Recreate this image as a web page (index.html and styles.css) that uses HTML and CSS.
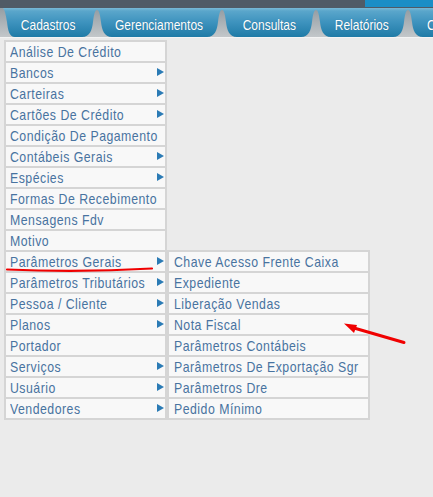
FILE: index.html
```html
<!DOCTYPE html>
<html lang="pt-BR">
<head>
<meta charset="utf-8">
<title>Menu</title>
<link rel="stylesheet" href="styles.css">
</head>
<body>
<div class="topbar"><div class="topbar-accent"></div></div>
<nav class="tabs">
  <svg class="bell-half" width="15" height="29" viewBox="0 0 15 29"><path d="M0 0 L3 0 C5 2 6 8 7 14 C8 22 9 29 15 29 L0 29 Z" fill="url(#g)"/></svg>
  <div class="tab tab-cad"><span class="tab-label">Cadastros</span></div>
  <svg class="bell" width="30" height="29" viewBox="0 0 30 29"><defs><linearGradient id="g" x1="0" y1="0" x2="0" y2="1"><stop offset="0" stop-color="#959ea4"/><stop offset="1" stop-color="#c3c7ca"/></linearGradient></defs><path d="M0 29 C8 29 10 22 11 14 C12 6 13 2 15 2 C17 2 18 6 19 14 C20 22 22 29 30 29 Z" fill="url(#g)"/></svg>
  <div class="tab tab-ger"><span class="tab-label">Gerenciamentos</span></div>
  <svg class="bell" width="30" height="29" viewBox="0 0 30 29"><path d="M0 29 C8 29 10 22 11 14 C12 6 13 2 15 2 C17 2 18 6 19 14 C20 22 22 29 30 29 Z" fill="url(#g)"/></svg>
  <div class="tab tab-con"><span class="tab-label">Consultas</span></div>
  <svg class="bell" width="30" height="29" viewBox="0 0 30 29"><path d="M0 29 C8 29 10 22 11 14 C12 6 13 2 15 2 C17 2 18 6 19 14 C20 22 22 29 30 29 Z" fill="url(#g)"/></svg>
  <div class="tab tab-rel"><span class="tab-label">Relatórios</span></div>
  <svg class="bell" width="30" height="29" viewBox="0 0 30 29"><path d="M0 29 C8 29 10 22 11 14 C12 6 13 2 15 2 C17 2 18 6 19 14 C20 22 22 29 30 29 Z" fill="url(#g)"/></svg>
  <div class="tab tab-last"><span class="tab-label tab-label-left">Configurações</span></div>
</nav>
<div class="menus">
  <ul class="menu">
    <li class="item"><span class="label">Análise De Crédito</span></li>
    <li class="item has-sub"><span class="label">Bancos</span></li>
    <li class="item has-sub"><span class="label">Carteiras</span></li>
    <li class="item has-sub"><span class="label">Cartões De Crédito</span></li>
    <li class="item"><span class="label">Condição De Pagamento</span></li>
    <li class="item has-sub"><span class="label">Contábeis Gerais</span></li>
    <li class="item has-sub"><span class="label">Espécies</span></li>
    <li class="item"><span class="label">Formas De Recebimento</span></li>
    <li class="item"><span class="label">Mensagens Fdv</span></li>
    <li class="item"><span class="label">Motivo</span></li>
    <li class="item has-sub open"><span class="label">Parâmetros Gerais</span>
      <ul class="menu submenu">
        <li class="item"><span class="label">Chave Acesso Frente Caixa</span></li>
        <li class="item"><span class="label">Expediente</span></li>
        <li class="item"><span class="label">Liberação Vendas</span></li>
        <li class="item"><span class="label">Nota Fiscal</span></li>
        <li class="item"><span class="label">Parâmetros Contábeis</span></li>
        <li class="item"><span class="label">Parâmetros De Exportação Sgr</span></li>
        <li class="item"><span class="label">Parâmetros Dre</span></li>
        <li class="item"><span class="label">Pedido Mínimo</span></li>
      </ul>
    </li>
    <li class="item has-sub"><span class="label">Parâmetros Tributários</span></li>
    <li class="item has-sub"><span class="label">Pessoa / Cliente</span></li>
    <li class="item has-sub"><span class="label">Planos</span></li>
    <li class="item"><span class="label">Portador</span></li>
    <li class="item has-sub"><span class="label">Serviços</span></li>
    <li class="item has-sub"><span class="label">Usuário</span></li>
    <li class="item has-sub"><span class="label">Vendedores</span></li>
  </ul>
</div>
<svg class="annot" width="433" height="497" viewBox="0 0 433 497">
  <path d="M7 269.5 C50 271.5 110 271 152 268.5" stroke="#f00000" stroke-width="2.2" fill="none" stroke-linecap="round"/>
  <path d="M404 342.5 L354 328" stroke="#f00000" stroke-width="3" fill="none" stroke-linecap="round"/>
  <path d="M344 323.5 L357 325 L354 333 Z" fill="#f00000"/>
</svg>
</body>
</html>
```
FILE: styles.css
```css
* { box-sizing: border-box; }
html, body { margin: 0; padding: 0; }
body {
  width: 433px;
  height: 497px;
  overflow: hidden;
  background: #ebebeb;
  font-family: "Liberation Sans", Arial, sans-serif;
  position: relative;
}
.topbar {
  height: 8px;
  background: #505b66;
  display: flex;
  justify-content: flex-end;
}
.topbar-accent {
  width: 68px;
  height: 7px;
  background: #1b8ec6;
}
.tabs {
  display: flex;
  height: 29px;
  overflow: hidden;
  background: linear-gradient(#79b9d6 0, #5aa6cb 3px, #3e93be 14px, #1f7ba7 100%);
  border-bottom: 1px solid #f4f4f4;
  box-sizing: content-box;
}
.bell, .bell-half { flex: none; display: block; }
.tab {
  flex: none;
  display: flex;
  justify-content: center;
  color: #fff;
  font-size: 15px;
  line-height: 29px;
  padding-top: 2px;
  white-space: nowrap;
  text-shadow: 0 0 1px rgba(0,40,70,.35);
}
.tab-label {
  display: inline-block;
  transform: scaleX(0.8);
  transform-origin: 50% 50%;
}
.tab-label-left { transform-origin: 0 50%; }
.tab-cad { width: 67px; }
.tab-ger { width: 95px; }
.tab-con { width: 64px; }
.tab-rel { width: 62px; }
.tab-last { width: 110px; justify-content: flex-start; padding-left: 4px; }
.menus {
  padding: 2px 0 0 4px;
}
.menu {
  list-style: none;
  margin: 0;
  padding: 2px;
  width: 163px;
  background: #d5d5d5;
  display: flex;
  flex-direction: column;
  gap: 2px;
}
.item {
  position: relative;
  display: flex;
  align-items: center;
  height: 19px;
  padding: 0 1px 0 4px;
  background: #f8f8f8;
  color: #4873a0;
  font-size: 15px;
  white-space: nowrap;
}
.label {
  display: inline-block;
  letter-spacing: 0.6px;
  transform: scaleX(0.82);
  transform-origin: 0 50%;
  line-height: 19px;
}
.has-sub::after {
  content: "";
  position: absolute;
  right: 1px;
  top: 5px;
  border-left: 7px solid #2b7bb5;
  border-top: 4.5px solid transparent;
  border-bottom: 4.5px solid transparent;
}
.submenu {
  position: absolute;
  left: 160px;
  top: -2px;
  width: 204px;
  padding-left: 3px;
}
.submenu .item { padding-left: 5px; }
.annot {
  position: absolute;
  left: 0;
  top: 0;
  pointer-events: none;
}
```
